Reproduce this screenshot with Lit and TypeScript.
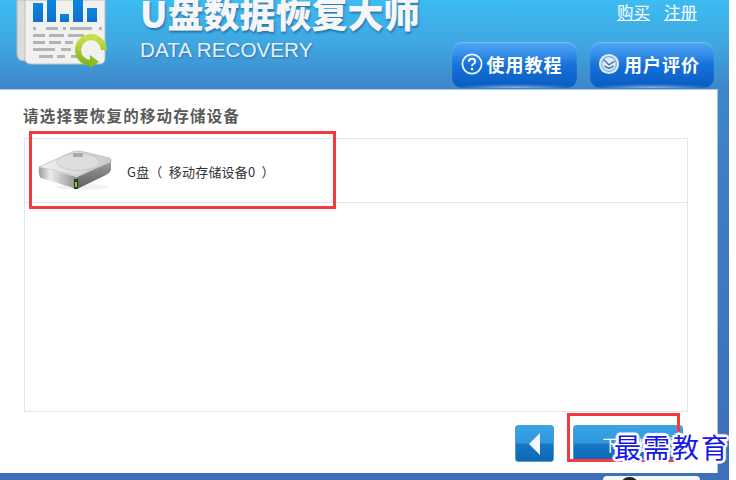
import { LitElement, html, svg, css } from "lit";
import { customElement } from "lit/decorators.js";

@customElement("app-root")
export class AppRoot extends LitElement {
  static styles = css`
    :host { display: block; width: 736px; height: 480px; background: #fff; overflow: hidden; position: relative; font-family: "Noto Sans CJK SC", "Liberation Sans", sans-serif; }
    .window { width: 729px; height: 480px; display: flex; flex-direction: column;
      background: linear-gradient(180deg, #3dbcf2 0, #3fa6e0 45px, #3f86ca 88px, #3f7cc0 200px, #3d70b6 480px); }
    .header { height: 89px; display: flex; overflow: hidden; flex: none; }
    .logo { flex: none; margin-left: 15px; width: 95px; height: 70px; }
    .brand { flex: none; margin-left: 30px; width: 300px; }
    .title { margin: -13px 0 0; font-size: 36px; font-weight: 900; line-height: 50px; letter-spacing: 0; white-space: nowrap;
      color: #f4f6f8; text-shadow: 1px 2px 2px rgba(30,70,120,.55); }
    .sub { margin: 1px 0 0; font: 20.7px/24px "Liberation Sans", sans-serif; color: #e6f1f9; text-shadow: 1px 1px 2px rgba(30,70,120,.5); white-space: nowrap; }
    .side { flex: 1; display: flex; flex-direction: column; align-items: flex-end; padding-right: 15px; }
    .links { display: flex; gap: 14px; height: 41px; padding: 0 17px 0 0; margin-top: 1px; font-size: 16.5px; line-height: 22px; color: #fff; }
    .links span { text-decoration: underline; height: 22px; }
    .tools { display: flex; gap: 13px; }
    .tool { width: 125px; height: 46px; box-sizing: border-box; border-radius: 10px; display: flex; align-items: center; justify-content: center; gap: 4px; padding: 0 6px 3px 0;
      color: #fff; font-size: 18px; font-weight: 700; letter-spacing: 1px; white-space: nowrap;
      background: radial-gradient(50% 4px at 50% 100%, #8fb6d6 0, rgba(143,182,214,0) 100%), linear-gradient(180deg, #4fa4f4 0, #3f98ee 8px, #1470d8 24px, #0a5cc0 100%);
      box-shadow: inset 0 1px 1px #7cc2f8; }
    .tool.narrow { width: 124px; }
    .tool svg { width: 22px; height: 22px; flex: none; }
    .panel { width: 718px; height: 384px; box-sizing: border-box; flex: none; background: #fff; border-top: 1px solid #a9c8e6; border-right: 1px solid #a9c8e6; padding: 14px 0 0 23px; position: relative; }
    .heading { margin: 0; font-size: 15.5px; line-height: 22px; font-weight: 700; color: #5a5a5a; letter-spacing: 1.2px; white-space: nowrap; }
    .list { margin: 12px 0 0 1px; width: 664px; height: 274px; box-sizing: border-box; border: 1px solid #dfe6f3; }
    .row { height: 64px; box-sizing: border-box; border-bottom: 1px solid #dfe6f3; display: flex; align-items: center; padding: 2px 0 0 13px; }
    .disk { width: 76px; height: 44px; flex: none; }
    .row-text { margin-left: 13px; font-size: 13px; line-height: 18px; color: #333; letter-spacing: .2px; white-space: pre; }
    .actions { display: flex; gap: 19px; margin: 13px 0 0 492px; }
    .nav { height: 37px; box-sizing: border-box; border-radius: 3px; color: #fff; display: flex; align-items: center; justify-content: center;
      background: linear-gradient(180deg, #3aa4e6 0, #2f97dc 48%, #1876c2 52%, #0e68b4 100%); border: 1px solid #4f9fd6; }
    .back { width: 39px; }
    .back svg { width: 14px; height: 24px; }
    .next { width: 110px; font-size: 16px; padding-right: 0; letter-spacing: 1px; }
    .footer { flex: 1; padding: 3px 0 0 603px; overflow: hidden; }
    .tab { width: 97px; height: 12px; background: #f4f6f8; border-radius: 4px 4px 0 0; display: flex; justify-content: flex-start; padding-left: 18px; box-sizing: border-box; }
    .tab i { display: block; width: 17px; height: 8px; margin-top: 1px; border-radius: 9px 9px 0 0; background: #222; }
    .mark { position: absolute; border: 3px solid #f5393d; box-sizing: border-box; pointer-events: none; }
    .mark.a { left: 29px; top: 131px; width: 307px; height: 78px; }
    .mark.b { left: 567px; top: 413px; width: 113px; height: 49px; }
    .watermark { position: absolute; left: 614px; top: 427px; font-size: 27px; line-height: 40px; letter-spacing: 2px; color: #1418e8; white-space: nowrap;
      text-shadow: 2px 0 0 #fff, -2px 0 0 #fff, 0 2px 0 #fff, 0 -2px 0 #fff, 2px 2px 0 #fff, -2px -2px 0 #fff, 2px -2px 0 #fff, -2px 2px 0 #fff, 3px 0 1px #fff, -3px 0 1px #fff, 0 3px 1px #fff, 0 -3px 1px #fff; }
  `;

  private logo() {
    const bars = [[18, 3, 10, 19], [32, 0, 9, 22], [45, 14, 9, 8], [58, 0, 10, 22], [72, 8, 10, 14]];
    const lines = [
      [18, 27, 3], [31, 27, 12], [48, 27, 3], [55, 27, 22], [84, 27, 3],
      [18, 34, 12], [34, 34, 15], [53, 34, 16],
      [18, 41, 12], [34, 41, 12], [50, 41, 8],
      [18, 48, 22], [46, 48, 10],
      [24, 55, 14], [42, 55, 8], [56, 55, 10],
    ];
    return html`<svg class="logo" viewBox="0 0 95 70">
      <defs>
        <linearGradient id="bar" x1="0" y1="0" x2="0" y2="1"><stop offset="0" stop-color="#0a86e0"/><stop offset="1" stop-color="#0f6fd0"/></linearGradient>
        <linearGradient id="ring" x1="0" y1="0" x2="0" y2="1"><stop offset="0" stop-color="#c9e04a"/><stop offset="1" stop-color="#86b41e"/></linearGradient>
      </defs>
      <path d="M6 0 H30 V61 H10 Q2 61 2 54 V0Z" fill="#dcdcdc" stroke="#b8b8b8"/>
      <path d="M10 0 H90 V58 Q90 64 84 64 H16 Q10 64 10 58Z" fill="#f1f1ef" stroke="#bdbdbd"/>
      ${bars.map(b => svg`<rect x=${b[0]} y=${b[1]} width=${b[2]} height=${b[3]} fill="url(#bar)"/>`)}
      ${lines.map(l => svg`<rect x=${l[0]} y=${l[1]} width=${l[2]} height="3" fill="#b4b4b4"/>`)}
      <path d="M76 63 A13 13 0 1 1 89 50" fill="none" stroke="url(#ring)" stroke-width="6"/>
      <path d="M75 55 L84 62 L75 68Z" fill="#8fbc22"/>
    </svg>`;
  }

  private disk() {
    return html`<svg class="disk" viewBox="0 0 76 44">
      <defs>
        <linearGradient id="top" x1="0" y1="0" x2="1" y2="0"><stop offset="0" stop-color="#f0f0f0"/><stop offset="1" stop-color="#c9cdc9"/></linearGradient>
        <linearGradient id="front" x1="0" y1="0" x2="1" y2="0"><stop offset="0" stop-color="#9a9a9a"/><stop offset=".3" stop-color="#ededed"/><stop offset="1" stop-color="#8d8d8d"/></linearGradient>
        <linearGradient id="edge" x1="0" y1="0" x2="0" y2="1"><stop offset="0" stop-color="#9c9c9c"/><stop offset="1" stop-color="#5c5c5c"/></linearGradient>
      </defs>
      <ellipse cx="44" cy="37" rx="26" ry="3" fill="#000" opacity=".05"/>
      <path d="M1 17 L34 2 Q38 1 42 1 L71 8 Q74 9 73 12 L39 26 Z" fill="url(#top)" stroke="#aaa" stroke-width=".6"/>
      <ellipse cx="40" cy="12" rx="21" ry="8.5" fill="#dedfdc" stroke="#bbb" stroke-width=".6"/>
      <rect x="35" y="3" width="10" height="4" rx="1" fill="#a9aaa6"/>
      <path d="M1 17 L39 27 V39 L3 28 Q0 26 1 17Z" fill="url(#front)"/>
      <path d="M39 27 L73 12 L73 20 Q72 23 68 25 L39 39Z" fill="url(#edge)"/>
      <rect x="36" y="29" width="4" height="10" fill="#2f3a2a"/>
      <rect x="37" y="32" width="2" height="5" fill="#7fd22a"/>
    </svg>`;
  }

  render() {
    return html`
      <div class="window">
        <header class="header">
          ${this.logo()}
          <div class="brand">
            <h1 class="title">U盘数据恢复大师</h1>
            <p class="sub">DATA RECOVERY</p>
          </div>
          <div class="side">
            <div class="links"><span>购买</span><span>注册</span></div>
            <div class="tools">
              <div class="tool">
                <svg viewBox="0 0 24 24"><circle cx="12" cy="12" r="10.5" fill="none" stroke="#eaf4ff" stroke-width="2"/><path d="M8.5 9.5 Q8.7 6.3 12 6.3 Q15.5 6.3 15.5 9.2 Q15.5 11 13.5 12 Q12 12.8 12 14.5" fill="none" stroke="#fff" stroke-width="2"/><circle cx="12" cy="17.5" r="1.4" fill="#fff"/></svg>
                <span>使用教程</span>
              </div>
              <div class="tool narrow">
                <svg viewBox="0 0 24 24"><circle cx="12" cy="12" r="11" fill="#dcebf7"/><circle cx="12" cy="12" r="8" fill="none" stroke="#7fa8cc" stroke-width="1.2"/><path d="M6 7 L12 13 L18 9 M7 14 Q12 19 17 14" fill="none" stroke="#3f7cb0" stroke-width="1.6"/></svg>
                <span>用户评价</span>
              </div>
            </div>
          </div>
        </header>
        <main class="panel">
          <h2 class="heading">请选择要恢复的移动存储设备</h2>
          <div class="list">
            <div class="row">
              ${this.disk()}
              <span class="row-text">G盘（  移动存储设备0  ）</span>
            </div>
          </div>
          <div class="actions">
            <div class="nav back"><svg viewBox="0 0 14 24"><path d="M12 1 V23 L1 12Z" fill="#f4f8fc"/></svg></div>
            <div class="nav next">下一步</div>
          </div>
        </main>
        <footer class="footer"><div class="tab"><i></i></div></footer>
      </div>
      <div class="mark a"></div>
      <div class="mark b"></div>
      <div class="watermark">最需教育</div>
    `;
  }
}
